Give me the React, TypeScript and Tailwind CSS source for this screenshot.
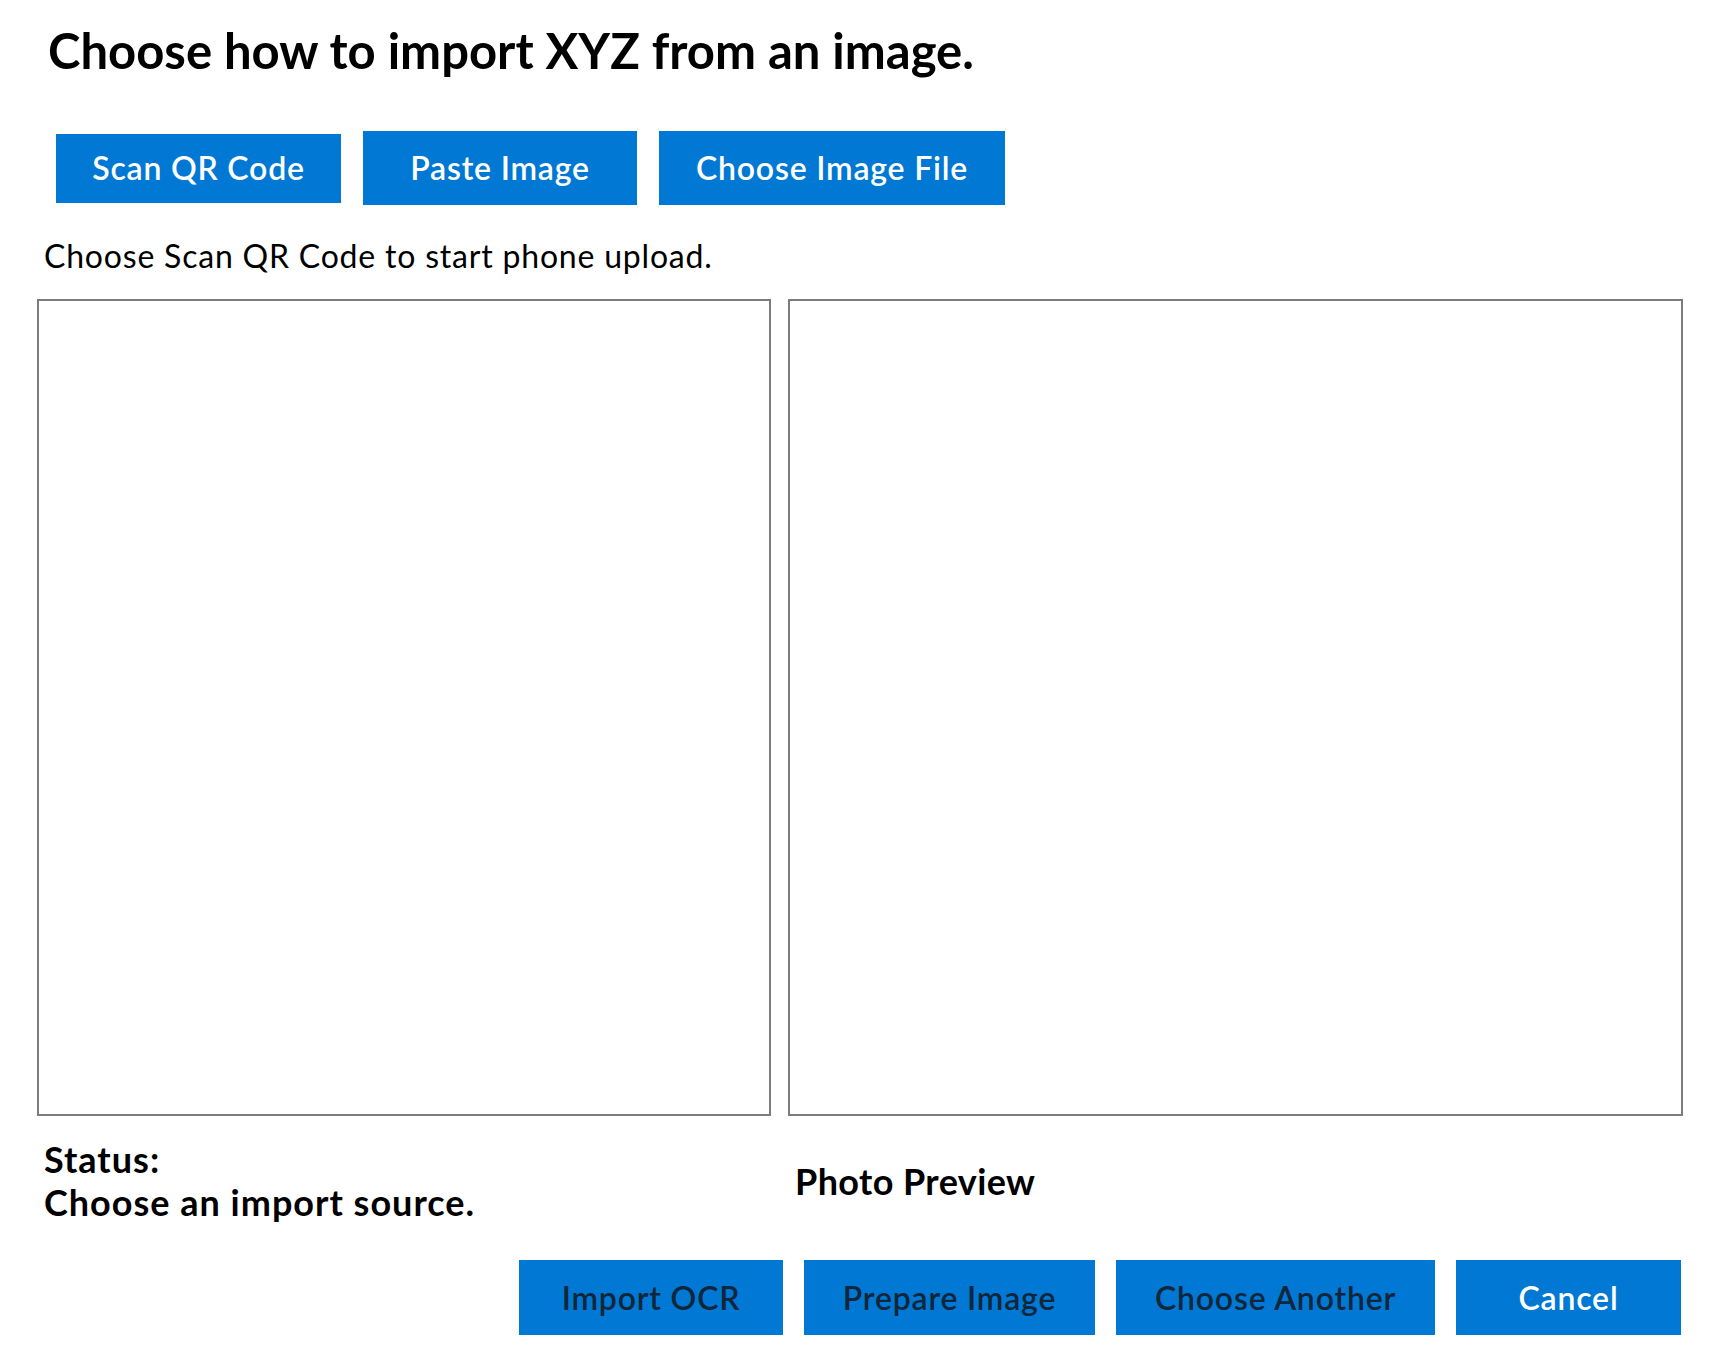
import React from "react";

const blueBtn =
  "flex items-center justify-center bg-[#0078d4] font-semibold text-[32px] tracking-[0.8px] leading-none";

const App: React.FC = () => {
  return (
    <div className="min-h-screen bg-white text-black font-['Lato','Liberation_Sans',sans-serif] px-[37px]">
      <h1 className="pt-[23px] pl-[11px] text-[49px] font-bold leading-[54px]">
        Choose how to import XYZ from an image.
      </h1>

      <div className="mt-[54px] flex items-center gap-[22px] pl-[19px]">
        <button className={`${blueBtn} w-[285px] h-[69px] text-white`}>Scan QR Code</button>
        <button className={`${blueBtn} w-[274px] h-[74px] text-white`}>Paste Image</button>
        <button className={`${blueBtn} w-[346px] h-[74px] text-white`}>Choose Image File</button>
      </div>

      <p className="mt-[33px] pl-[7px] text-[32px] tracking-[0.8px] leading-[36px]">
        Choose Scan QR Code to start phone upload.
      </p>

      <div className="mt-[25px] grid grid-cols-[734px_1fr] gap-[17px]">
        <div className="h-[817px] border-2 border-[#7c7c7c]" />
        <div className="h-[817px] border-2 border-[#7c7c7c]" />
      </div>

      <div className="mt-[22px] grid grid-cols-[734px_1fr] gap-[17px] font-bold text-[36px] leading-[43px]">
        <div className="pl-[7px] tracking-[1px]">
          <div>Status:</div>
          <div>Choose an import source.</div>
        </div>
        <div className="pl-[7px] flex items-center tracking-[0.4px]">Photo Preview</div>
      </div>

      <div className="mt-[36px] flex justify-end gap-[21px] pr-[2px]">
        <button className={`${blueBtn} w-[264px] h-[75px] text-[#10263a]`}>Import OCR</button>
        <button className={`${blueBtn} w-[291px] h-[75px] text-[#10263a]`}>Prepare Image</button>
        <button className={`${blueBtn} w-[319px] h-[75px] text-[#10263a]`}>Choose Another</button>
        <button className={`${blueBtn} w-[225px] h-[75px] text-white`}>Cancel</button>
      </div>
    </div>
  );
};

export default App;
